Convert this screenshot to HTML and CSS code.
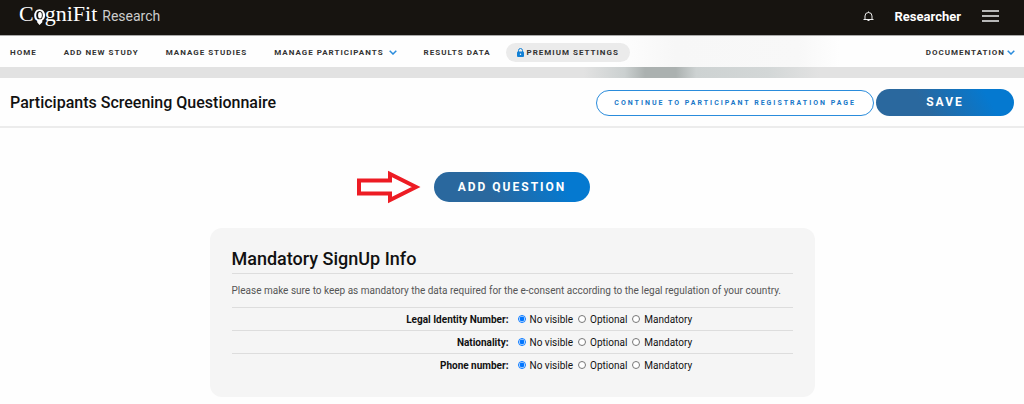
FILE: index.html
```
<!DOCTYPE html>
<html lang="en">
<head>
  <meta charset="UTF-8" />
  <meta name="viewport" content="width=device-width, initial-scale=1.0" />
  <title>CogniFit Research - Participants Screening Questionnaire</title>
  <link rel="stylesheet" href="styles.css">
</head>
<body>
  <header class="topbar">
    <a class="logo" href="#">
      <span class="logo-name">C<span class="logo-o">o<svg class="logo-head" viewBox="0 0 14 20" aria-hidden="true">
        <path d="M7 1C3.500 1 1.500 4 1.500 7.500c0 3 1 4.500 3 5.500v2l2.500 3 3-3v-2c1.800-1 3-2.500 3-5.500C13 4 10.500 1 7 1z" fill="#fff" />
        <ellipse cx="7" cy="7.500" rx="3.500" ry="4.500" fill="#171410" />
        <ellipse cx="7.500" cy="7.500" rx="2" ry="3.500" fill="#fff" />
      </svg></span>gniFit</span>
      <span class="logo-sub">Research</span>
    </a>
    <div class="user">
      <button class="icon-button" aria-label="Notifications">
        <svg width="11" height="11" viewBox="0 0 11 11" fill="none" stroke="#eee">
          <path d="M.5 8.500h10M2 8.500V5a3.500 3.500 0 0 1 7 0v3.500M5.500 .5v1.200M4.500 9.500h2" />
        </svg>
      </button>
      <a class="user-name" href="#">Researcher</a>
      <button class="icon-button" aria-label="Menu">
        <svg width="17" height="12" viewBox="0 0 17 12" fill="none" stroke="#eee" stroke-width="1.500">
          <path d="M0 1h17M0 6h17M0 11h17" />
        </svg>
      </button>
    </div>
  </header>

  <nav class="menu">
    <a href="#">HOME</a>
    <a href="#">ADD NEW STUDY</a>
    <a href="#">MANAGE STUDIES</a>
    <a href="#">MANAGE PARTICIPANTS
      <svg class="chevron" width="8" height="5" viewBox="0 0 8 5"><path d="M.7 .7L4 4 7.300 .7" /></svg>
    </a>
    <a href="#">RESULTS DATA</a>
    <a class="premium" href="#">
      <svg width="7" height="9" viewBox="0 0 7 9">
        <path d="M1.500 4V2.500a2 2 0 0 1 4 0V4" fill="none" stroke="#1280d5" />
        <rect y="3.500" width="7" height="5.500" rx="1" fill="#1280d5" />
        <circle cx="3.500" cy="6.200" r=".7" fill="#fff" />
      </svg>PREMIUM SETTINGS</a>
    <a class="docs" href="#">DOCUMENTATION
      <svg class="chevron" width="8" height="5" viewBox="0 0 8 5"><path d="M.7 .7L4 4 7.300 .7" /></svg>
    </a>
  </nav>
  <div class="banner"></div>

  <div class="title-bar">
    <h1>Participants Screening Questionnaire</h1>
    <div class="actions">
      <button class="btn-outline">CONTINUE TO PARTICIPANT REGISTRATION PAGE</button>
      <button class="btn btn-save">SAVE</button>
    </div>
  </div>

  <main>
    <div class="add-row">
      <svg class="arrow" width="66" height="34" viewBox="0 0 66 34" aria-hidden="true">
        <path d="M3 10.500h31V4l26 13-26 13v-6.500H3z" fill="#fff" stroke="#ed1c24" stroke-width="4" />
      </svg>
      <button class="btn btn-add">ADD QUESTION</button>
    </div>

    <section class="card">
      <h2>Mandatory SignUp Info</h2>
      <p>Please make sure to keep as mandatory the data required for the e-consent according to the legal regulation of your country.</p>
      <div class="field" role="radiogroup" aria-labelledby="identity">
        <span class="field-name" id="identity">Legal Identity Number:</span>
        <div class="options">
          <label><input type="radio" name="identity" checked />No visible</label>
          <label><input type="radio" name="identity" />Optional</label>
          <label><input type="radio" name="identity" />Mandatory</label>
        </div>
      </div>
      <div class="field" role="radiogroup" aria-labelledby="nationality">
        <span class="field-name" id="nationality">Nationality:</span>
        <div class="options">
          <label><input type="radio" name="nationality" checked />No visible</label>
          <label><input type="radio" name="nationality" />Optional</label>
          <label><input type="radio" name="nationality" />Mandatory</label>
        </div>
      </div>
      <div class="field" role="radiogroup" aria-labelledby="phone">
        <span class="field-name" id="phone">Phone number:</span>
        <div class="options">
          <label><input type="radio" name="phone" checked />No visible</label>
          <label><input type="radio" name="phone" />Optional</label>
          <label><input type="radio" name="phone" />Mandatory</label>
        </div>
      </div>
    </section>
  </main>
</body>
</html>
```
FILE: styles.css
```
* {
  box-sizing: border-box;
}

body {
  margin: 0;
  background: #fefefe;
  color: #111;
  font-family: Roboto, Arial, sans-serif;
  font-size: 10px;
}

a {
  color: inherit;
  text-decoration: none;
}

button {
  font-family: inherit;
  cursor: pointer;
}

.topbar {
  display: flex;
  align-items: center;
  justify-content: space-between;
  height: 35px;
  padding: 0 25px 3px 19px;
  background: #171410;
  color: #fff;
}

.logo {
  display: flex;
  align-items: baseline;
  gap: 5px;
  padding-bottom: 4px;
}

.logo-name {
  font-family: "Liberation Serif", serif;
  font-size: 22px;
  line-height: 28px;
}

.logo-o {
  position: relative;
}

/* head silhouette drawn over the letter */
.logo-head {
  position: absolute;
  left: -1px;
  top: 7px;
  width: 13px;
  height: 19px;
}

.logo-sub {
  color: #ccc;
  font-size: 14px;
  font-weight: 400;
}

.user {
  display: flex;
  align-items: center;
  gap: 21px;
}

.user-name {
  font-size: 13px;
  font-weight: 700;
}

.icon-button {
  display: flex;
  padding: 0;
  border: 0;
  background: none;
}

.menu {
  display: flex;
  align-items: center;
  gap: 27px;
  height: 32px;
  padding: 2px 9px 0 10px;
  border-top: 1px solid #aaa;
  background: linear-gradient(90deg, #fefefe 60%, #f7f7f7 66%, #f8f8f8 78%, #fefefe 82%);
  color: #333;
  font-size: 8px;
  font-weight: 700;
  letter-spacing: 1px;
  white-space: nowrap;
}

.menu a {
  display: flex;
  align-items: center;
}

.chevron {
  margin-left: 5px;
  fill: none;
  stroke: #2a8cdc;
  stroke-width: 1.5;
}

.menu .premium {
  gap: 3px;
  height: 19px;
  margin-left: -12px;
  padding: 0 11px;
  border-radius: 10px;
  background: #ebebeb;
}

.docs {
  margin-left: auto;
}

.docs .chevron {
  margin-left: 2px;
}

.banner {
  height: 11px;
  background: linear-gradient(90deg, #e2e2e2 57%, #cbd0d0 61%, #abb1b0 63%, #abb1b0 66%, #cdd2d2 68%, #d3d7d7 75%, #e2e2e2 80%);
}

.title-bar {
  display: flex;
  align-items: center;
  justify-content: space-between;
  height: 50px;
  padding: 0 10px;
  border-bottom: 2px solid #ececec;
}

h1 {
  margin: 0;
  font-size: 16px;
  font-weight: 500;
}

.actions {
  display: flex;
  align-items: flex-end;
  gap: 2px;
}

.btn {
  border: 0;
  border-radius: 15px;
  background: linear-gradient(60deg, #2a689e 35%, #0579d0 80%);
  color: #fff;
  font-size: 12px;
  font-weight: 700;
  letter-spacing: 2px;
}

.btn-save {
  width: 138px;
  height: 27px;
}

.btn-outline {
  height: 26px;
  padding: 0 17px;
  border: 1px solid #2a8cdc;
  border-radius: 13px;
  background: #fff;
  color: #1878c8;
  font-size: 7px;
  font-weight: 700;
  letter-spacing: 2px;
}

main {
  padding: 44px 20px 7px;
}

.add-row {
  display: flex;
  justify-content: center;
  position: relative;
  width: max-content;
  margin: 0 auto;
}

.btn-add {
  height: 30px;
  padding: 0 24px;
}

.arrow {
  position: absolute;
  right: 100%;
  top: -2px;
  margin-right: 12px;
}

.card {
  max-width: 605px;
  margin: 26px auto 0;
  padding: 20px 22px 21px;
  border-radius: 12px;
  background: #f5f5f5;
}

h2 {
  margin: 0;
  padding-bottom: 3px;
  border-bottom: 1px solid #ddd;
  font-size: 18px;
  font-weight: 500;
  line-height: 22px;
}

.card p {
  margin: 10px 0;
  color: #555;
  line-height: 13px;
}

.field {
  display: flex;
  align-items: center;
  gap: 9px;
  height: 23px;
  border-top: 1px solid #ddd;
}

.field-name {
  flex: 0 0 277px;
  font-weight: 700;
  text-align: right;
}

.options {
  display: flex;
  gap: 5px;
}

.options label {
  display: flex;
  align-items: center;
  gap: 4px;
}

.options input {
  width: 8px;
  height: 8px;
  margin: 0;
}
```
